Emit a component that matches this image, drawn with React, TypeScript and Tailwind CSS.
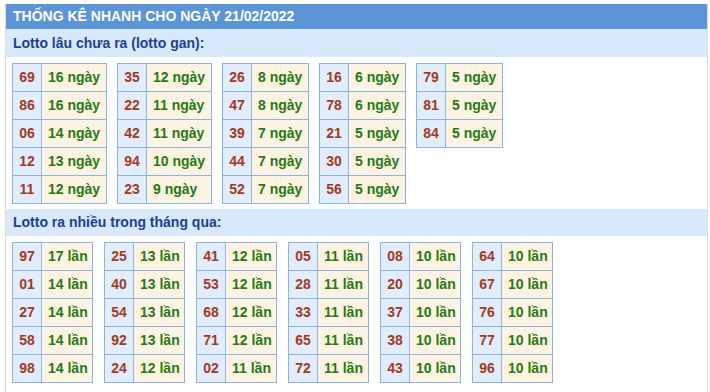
const ganTables: [string, number][][] = [
  [['69', 16], ['86', 16], ['06', 14], ['12', 13], ['11', 12]],
  [['35', 12], ['22', 11], ['42', 11], ['94', 10], ['23', 9]],
  [['26', 8], ['47', 8], ['39', 7], ['44', 7], ['52', 7]],
  [['16', 6], ['78', 6], ['21', 5], ['30', 5], ['56', 5]],
  [['79', 5], ['81', 5], ['84', 5]],
];

const hotTables: [string, number][][] = [
  [['97', 17], ['01', 14], ['27', 14], ['58', 14], ['98', 14]],
  [['25', 13], ['40', 13], ['54', 13], ['92', 13], ['24', 12]],
  [['41', 12], ['53', 12], ['68', 12], ['71', 12], ['02', 11]],
  [['05', 11], ['28', 11], ['33', 11], ['65', 11], ['72', 11]],
  [['08', 10], ['20', 10], ['37', 10], ['38', 10], ['43', 10]],
  [['64', 10], ['67', 10], ['76', 10], ['77', 10], ['96', 10]],
];

// text column widths (incl. right border), matched to the original layout
const colWidth: Record<string, string> = {
  wide: 'w-[65px]',
  narrow: 'w-[57px]',
  count: 'w-[51px]',
};

function LottoTable({ rows, unit, col }: { rows: [string, number][], unit: string, col: string }) {
  return (
    <div className="flex flex-col border-l border-t border-[#8db3e2] self-start">
      {rows.map(([num, count], i) => (
        <div key={i} className="flex h-[28px] border-b border-[#8db3e2]">
          <div className="w-[29px] flex items-center justify-center bg-[#e2edfc] text-[#a33a22] border-r border-[#8db3e2]">
            {num}
          </div>
          <div className={`${colWidth[col]} flex items-center pl-[6px] bg-[#fdf3e2] text-[#267a14] border-r border-[#8db3e2] whitespace-nowrap`}>
            {count} {unit}
          </div>
        </div>
      ))}
    </div>
  );
}

export default function App() {
  return (
    <div className="w-[710px] h-[392px] bg-white pt-[4px] pl-[5px] pr-[2px] overflow-hidden" style={{ fontFamily: '"Liberation Sans", Arial, sans-serif' }}>
      <div className="h-full border-l border-r border-[#dcdcdc] text-[14px] font-bold">
        <div className="h-[25px] bg-[#5b95d6] text-white flex items-center pl-[7px]">
          THỐNG KÊ NHANH CHO NGÀY 21/02/2022
        </div>
        <div className="h-[28px] bg-[#d7e9fb] text-[#1e3f92] flex items-center pl-[7px]">
          Lotto lâu chưa ra (lotto gan):
        </div>
        <div className="flex gap-[10px] pl-[6px] pt-[6px] pb-[5px]">
          {ganTables.map((rows, i) => (
            <LottoTable key={i} rows={rows} unit="ngày" col={i < 2 ? 'wide' : 'narrow'} />
          ))}
        </div>
        <div className="h-[27px] bg-[#d7e9fb] text-[#1e3f92] flex items-center pl-[7px]">
          Lotto ra nhiều trong tháng qua:
        </div>
        <div className="flex gap-[11px] pl-[6px] pt-[6px]">
          {hotTables.map((rows, i) => (
            <LottoTable key={i} rows={rows} unit="lần" col="count" />
          ))}
        </div>
      </div>
    </div>
  );
}
